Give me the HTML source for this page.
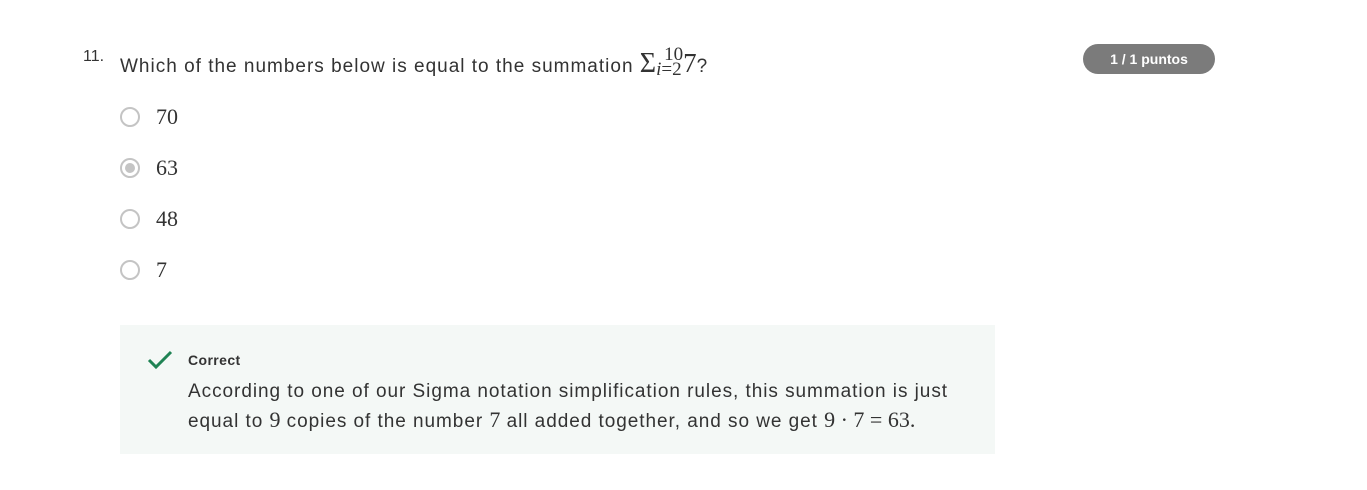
<!DOCTYPE html>
<html><head><style>
body{margin:0;width:1367px;height:490px;background:#fff;font-family:"Liberation Sans",sans-serif;color:#333;position:relative;overflow:hidden}
.a{position:absolute;white-space:nowrap}
.m{font-family:"Liberation Serif",serif;letter-spacing:0}
.r{position:absolute;left:120px;width:20px;height:20px;border:2px solid #c4c4c4;border-radius:50%;box-sizing:border-box}
.o{font-family:"Liberation Serif",serif;font-size:22px;position:absolute;left:156px;color:#333}
</style></head><body>
<div class="a" style="left:83px;top:48px;font-size:16px">11.</div>
<div class="a" style="left:120px;top:50px;font-size:19px;letter-spacing:1px;line-height:30px">Which of the numbers below is equal to the summation <span class="m" style="font-size:28px;line-height:20px">Σ</span><span class="m" style="display:inline-block;vertical-align:-6px;font-size:19px;line-height:15px;position:relative;top:-3px"><span style="display:block;margin-left:8px">10</span><span style="display:block"><i>i</i>=2</span></span><span class="m" style="font-size:27px;line-height:20px">7</span>?</div>
<div class="a" style="left:1083px;top:44px;width:132px;height:30px;border-radius:15px;background:#7b7b7b;color:#fff;font-size:14px;font-weight:bold;text-align:center;line-height:30px">1 / 1 puntos</div>
<div class="r" style="top:107px"></div><div class="o" style="top:104px">70</div>
<div class="r" style="top:158px"><div style="position:absolute;left:3px;top:3px;width:10px;height:10px;border-radius:50%;background:#c4c4c4"></div></div><div class="o" style="top:155px">63</div>
<div class="r" style="top:209px"></div><div class="o" style="top:206px">48</div>
<div class="r" style="top:260px"></div><div class="o" style="top:257px">7</div>
<div class="a" style="left:120px;top:325px;width:875px;height:129px;background:#f4f8f6"></div>
<svg class="a" style="left:147px;top:349px" width="28" height="22"><path d="M2 11 L9 18 L24 3" fill="none" stroke="#1f8354" stroke-width="3"/></svg>
<div class="a" style="left:188px;top:352px;font-size:14px;font-weight:bold;color:#333;letter-spacing:.4px">Correct</div>
<div class="a" style="left:188px;top:377px;font-size:19px;line-height:30px;color:#333;letter-spacing:.95px">According to one of our Sigma notation simplification rules, this summation is just<br>equal to <span class="m" style="font-size:22px;line-height:20px">9</span> copies of the number <span class="m" style="font-size:22px;line-height:20px">7</span> all added together, and so we get <span class="m" style="font-size:22px;line-height:20px">9 · 7 = 63.</span></div>
</body></html>
